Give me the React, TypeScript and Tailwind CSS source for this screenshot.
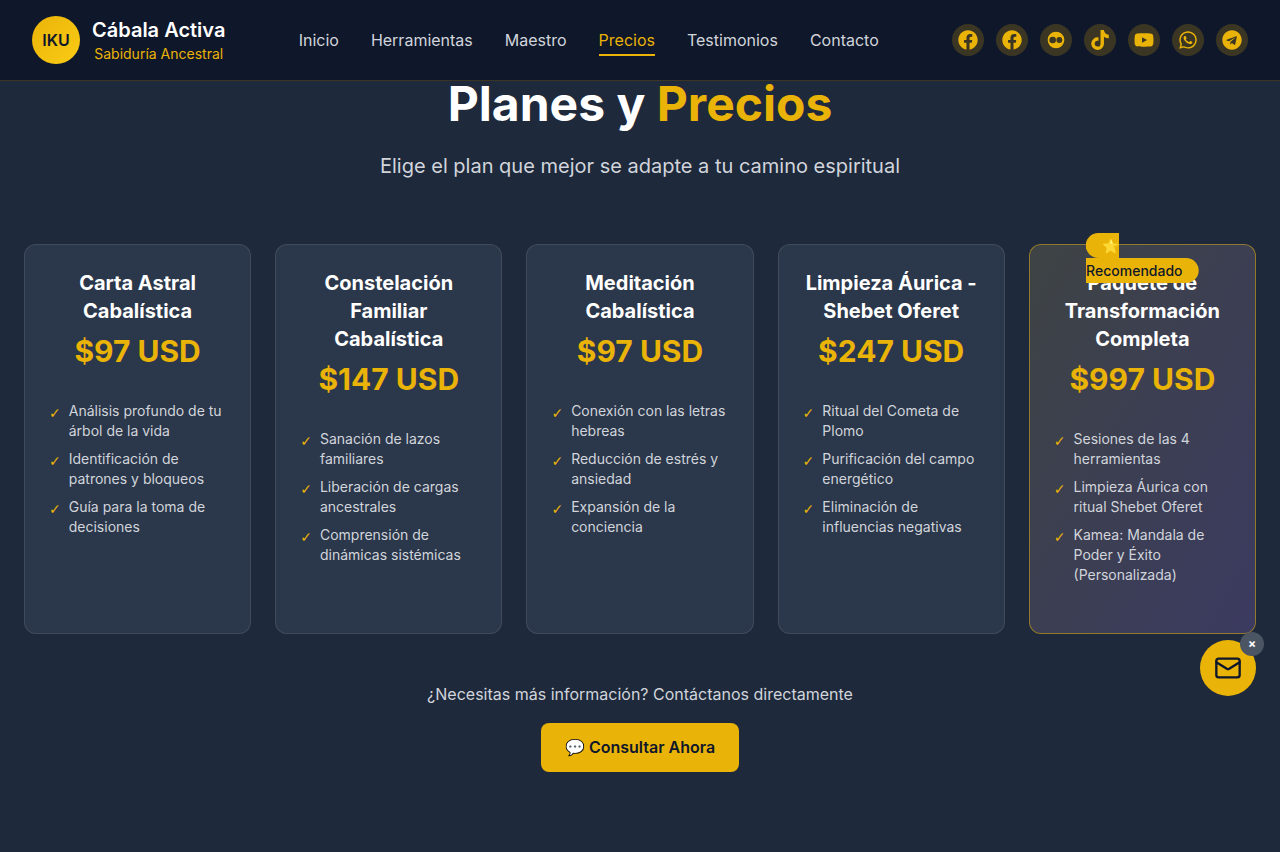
import { Mail } from "lucide-react";
import { FaFacebook, FaTiktok, FaYoutube, FaWhatsapp, FaTelegram } from "react-icons/fa";

const navLinks = ["Inicio", "Herramientas", "Maestro", "Precios", "Testimonios", "Contacto"];

// flickr glyph: solid disc with two punched dots
const FlickrIcon = ({ className }: { className?: string }) => (
  <svg viewBox="0 0 24 24" fill="currentColor" className={className}>
    <path
      fillRule="evenodd"
      d="M12 2a10 10 0 1 0 0 20a10 10 0 1 0 0-20ZM8 8a4 4 0 1 0 0 8a4 4 0 1 0 0-8ZM16 8.5a3.5 3.5 0 1 0 0 7a3.5 3.5 0 1 0 0-7Z"
    />
  </svg>
);

const socials = [FaFacebook, FaFacebook, FlickrIcon, FaTiktok, FaYoutube, FaWhatsapp, FaTelegram];

const plans = [
  {
    title: "Carta Astral Cabalística",
    price: "$97 USD",
    features: ["Análisis profundo de tu árbol de la vida", "Identificación de patrones y bloqueos", "Guía para la toma de decisiones"],
  },
  {
    title: "Constelación Familiar Cabalística",
    price: "$147 USD",
    features: ["Sanación de lazos familiares", "Liberación de cargas ancestrales", "Comprensión de dinámicas sistémicas"],
  },
  {
    title: "Meditación Cabalística",
    price: "$97 USD",
    features: ["Conexión con las letras hebreas", "Reducción de estrés y ansiedad", "Expansión de la conciencia"],
  },
  {
    title: "Limpieza Áurica - Shebet Oferet",
    price: "$247 USD",
    features: ["Ritual del Cometa de Plomo", "Purificación del campo energético", "Eliminación de influencias negativas"],
  },
  {
    title: "Paquete de Transformación Completa",
    price: "$997 USD",
    features: ["Sesiones de las 4 herramientas", "Limpieza Áurica con ritual Shebet Oferet", "Kamea: Mandala de Poder y Éxito (Personalizada)"],
    featured: true,
  },
];

const App = () => {
  return (
    <div className="min-h-screen bg-[#1e293b] font-['Inter',sans-serif] text-white antialiased">
      {/* HEADER */}
      <header className="flex h-[81px] items-center justify-between border-b border-[#eab308]/20 bg-[#0f172a] px-8">
        <div className="flex items-center gap-3">
          <div className="flex h-12 w-12 items-center justify-center rounded-full bg-gradient-to-br from-[#eab308] to-[#facc15] font-semibold text-[#0f172a]">
            IKU
          </div>
          <div className="text-center">
            <div className="text-xl font-semibold">Cábala Activa</div>
            <div className="text-sm text-[#eab308]">Sabiduría Ancestral</div>
          </div>
        </div>

        <nav className="flex items-center gap-8">
          {navLinks.map((link) => (
            <a key={link} href="#" className={link === "Precios" ? "relative text-[#eab308]" : "relative text-[#d1d5db]"}>
              {link}
              {link === "Precios" && <span className="absolute -bottom-1 left-0 h-0.5 w-full bg-[#eab308]" />}
            </a>
          ))}
        </nav>

        <div className="flex items-center gap-3">
          {socials.map((Icon, i) => (
            <a key={i} href="#" className="flex h-8 w-8 items-center justify-center rounded-full bg-[#eab308]/20 text-[#eab308]">
              <Icon className="h-5 w-5" />
            </a>
          ))}
        </div>
      </header>

      {/* PRICING */}
      <section className="-mt-px px-6">
        <div className="mb-16 text-center">
          <h1 className="mb-6 text-5xl font-bold">
            Planes y <span className="text-[#eab308]">Precios</span>
          </h1>
          <p className="text-xl text-[#d1d5db]">Elige el plan que mejor se adapte a tu camino espiritual</p>
        </div>

        <div className="grid grid-cols-5 gap-6">
          {plans.map((plan) => (
            <div
              key={plan.title}
              className={
                plan.featured
                  ? "relative rounded-xl border border-[#eab308]/50 bg-gradient-to-br from-[#3e4344] to-[#3b3a60] p-6"
                  : "relative rounded-xl border border-white/10 bg-[#334155]/60 p-6"
              }
            >
              {plan.featured && (
                <div className="absolute -top-3 left-1/2 -translate-x-1/2 leading-[25px]">
                  <span className="rounded-full bg-[#eab308] px-4 py-1 text-sm font-medium text-[#0f172a]">⭐ Recomendado</span>
                </div>
              )}
              <h3 className="mb-2 text-center text-xl font-bold">{plan.title}</h3>
              <div className="mb-8 text-center text-3xl font-bold text-[#eab308]">{plan.price}</div>
              <ul className="mb-6 space-y-2">
                {plan.features.map((feature) => (
                  <li key={feature} className="flex items-start gap-2 text-sm text-[#d1d5db]">
                    <span className="mt-0.5 font-['DejaVu_Sans',sans-serif] text-[#eab308]">✓</span>
                    <span>{feature}</span>
                  </li>
                ))}
              </ul>
            </div>
          ))}
        </div>

        <div className="mt-12 text-center">
          <p className="mb-[17px] text-[#d1d5db]">¿Necesitas más información? Contáctanos directamente</p>
          <a href="#" className="inline-block rounded-lg bg-[#eab308] px-6 py-3 font-semibold leading-[25px] text-[#0f172a]">
            💬 Consultar Ahora
          </a>
        </div>
      </section>

      {/* FLOATING CONTACT */}
      <div className="fixed bottom-[156px] right-6">
        <button className="flex h-14 w-14 items-center justify-center rounded-full bg-[#eab308] text-[#0f172a]">
          <Mail className="h-7 w-7" />
        </button>
        <button className="absolute -right-2 -top-2 flex h-6 w-6 items-center justify-center rounded-full bg-[#4b5563] text-xs font-bold text-white">
          ×
        </button>
      </div>
    </div>
  );
};

export default App;
